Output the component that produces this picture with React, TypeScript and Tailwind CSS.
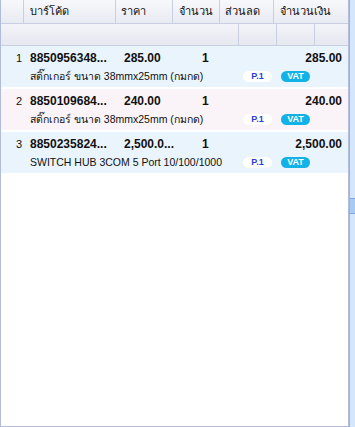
import React from "react";

type Item = {
  no: number;
  barcode: string;
  price: string;
  qty: string;
  amount: string;
  name: string;
};

const items: Item[] = [
  { no: 1, barcode: "8850956348...", price: "285.00", qty: "1", amount: "285.00", name: "สติ๊กเกอร์ ขนาด 38mmx25mm (กมกด)" },
  { no: 2, barcode: "8850109684...", price: "240.00", qty: "1", amount: "240.00", name: "สติ๊กเกอร์ ขนาด 38mmx25mm (กมกด)" },
  { no: 3, barcode: "8850235824...", price: "2,500.0...", qty: "1", amount: "2,500.00", name: "SWITCH HUB 3COM 5 Port 10/100/1000" },
];

const font = { fontFamily: "Tahoma, 'Liberation Sans', 'DejaVu Sans', 'Noto Sans', sans-serif" };

const headCell = "h-full flex items-center border-r border-[#c9cfe2] bg-gradient-to-b from-[#f7f8fb] to-[#e9ebf3] text-[11px] text-[#111]";

const App: React.FC = () => {
  return (
    <div className="w-[355px] h-[427px] flex bg-white overflow-hidden" style={font}>
      <div className="w-[349px] h-full flex flex-col border-l border-b border-r border-[#b3bbdd]">
        {/* header */}
        <div className="h-[24px] flex border-b border-[#c9cfe2]">
          <div className={`${headCell} w-[23px]`} />
          <div className={`${headCell} w-[92px] pl-[6px]`}>บาร์โค้ด</div>
          <div className={`${headCell} w-[57px] pl-[5px]`}>ราคา</div>
          <div className={`${headCell} w-[47px] pl-[6px]`}>จำนวน</div>
          <div className={`${headCell} w-[54px] pl-[5px]`}>ส่วนลด</div>
          <div className={`${headCell} flex-1 pl-[6px] border-r-0`}>จำนวนเงิน</div>
        </div>

        {/* filter row */}
        <div className="h-[22px] flex bg-[#eceef4] border-b border-[#c9cfe2]">
          <div className="w-[238px] h-full border-r border-[#c9cfe2] bg-gradient-to-b from-[#f3f4f8] to-[#e6e8f0]" />
          <div className="w-[38px] h-full border-r border-[#c9cfe2] bg-gradient-to-b from-[#f3f4f8] to-[#e6e8f0]" />
          <div className="w-[38px] h-full border-r border-[#c9cfe2] bg-gradient-to-b from-[#f3f4f8] to-[#e6e8f0]" />
          <div className="flex-1 h-full bg-gradient-to-b from-[#f3f4f8] to-[#e6e8f0]" />
        </div>

        {/* rows */}
        <div className="flex flex-col gap-[2px]">
          {items.map((it) => (
            <div
              key={it.no}
              className={`h-[41px] flex flex-col justify-center pt-[1px] text-[#111] ${it.no % 2 === 0 ? "bg-[#faf4f8]" : "bg-[#eaf4fc]"}`}
            >
              <div className="flex items-center h-[19px] text-[12px] font-bold">
                <div className="w-[22px] text-right pr-[1px] font-normal text-[11px]">{it.no}</div>
                <div className="w-[93px] pl-[7px] whitespace-nowrap">{it.barcode}</div>
                <div className="w-[86px] pl-[8px] whitespace-nowrap">{it.price}</div>
                <div className="w-[20px]">{it.qty}</div>
                <div className="flex-1 text-right pr-[6px]">{it.amount}</div>
              </div>
              <div className="flex items-center h-[18px] text-[10.5px]">
                <div className="w-[242px] pl-[29px] whitespace-nowrap">{it.name}</div>
                <span className="w-[29px] h-[11px] rounded-full bg-white text-[#2a3fd6] text-[9px] font-bold flex items-center justify-center">P.1</span>
                <span className="ml-[9px] w-[29px] h-[11px] rounded-full bg-[#12b2e6] text-white text-[9px] font-bold flex items-center justify-center">VAT</span>
              </div>
            </div>
          ))}
        </div>
      </div>

      {/* scrollbar strip */}
      <div className="flex-1 h-full bg-[#d3e6fb] border-l border-[#8fb6e6] flex flex-col">
        <div className="h-[198px]" />
        <div className="h-[16px] bg-[#a8cbf3] border-y border-[#7fa9de]" />
      </div>
    </div>
  );
};

export default App;
